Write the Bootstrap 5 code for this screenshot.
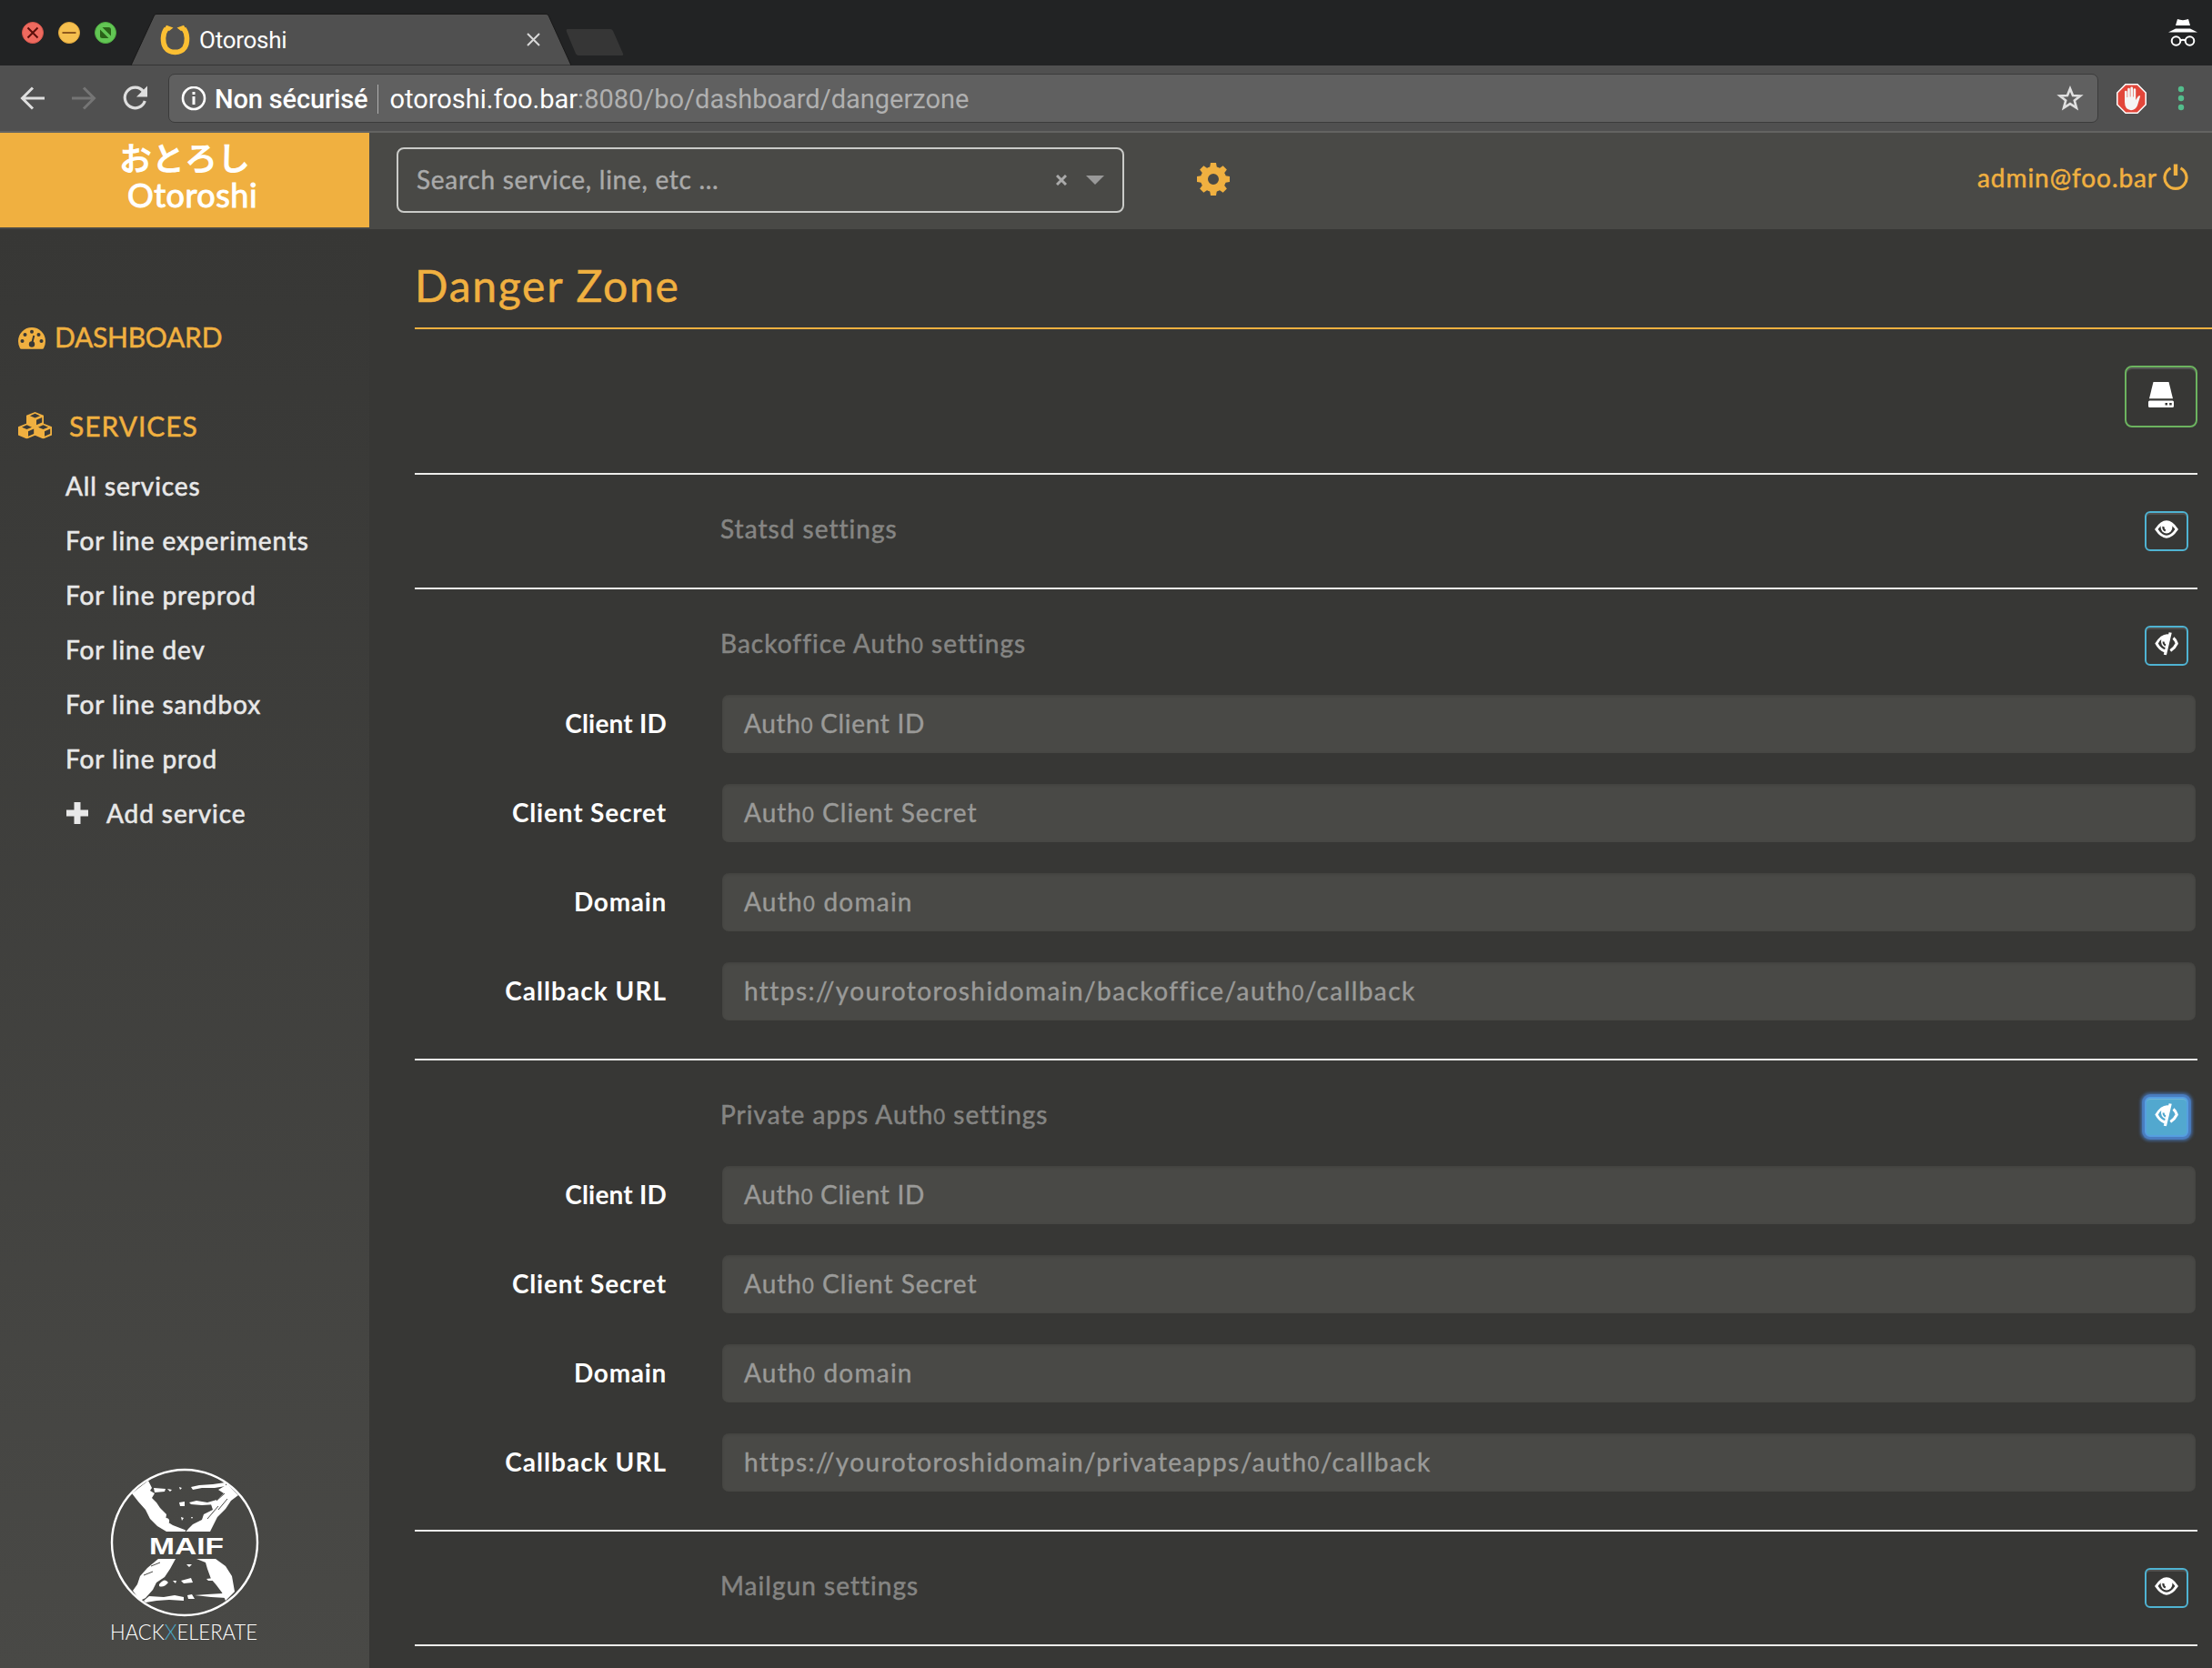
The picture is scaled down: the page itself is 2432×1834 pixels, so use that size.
<!DOCTYPE html>
<html lang="fr">
<head>
<meta charset="utf-8">
<title>Otoroshi</title>
<link href="https://cdn.jsdelivr.net/npm/bootstrap@5.3.0/dist/css/bootstrap.min.css" rel="stylesheet">
<style>
  :root { --oto: #f0b040; --panel: #494946; --ground: #373735; }
  html, body { height: 100%; overflow: hidden; }
  body { margin: 0; background: var(--ground); color: #fff; font-family: Lato, "Noto Sans CJK JP", sans-serif; font-size: 28px; line-height: 40px; }
  svg { display: block; flex: none; }
  .chrome { font-family: Roboto, "Liberation Sans", sans-serif; }
  .tabstrip { height: 72px; background: #222324; }
  .toolbar { height: 74px; background: #505050; border-bottom: 2px solid #636361; padding-left: 22px; }
  .nav-next { margin-left: 28px; }
  .lights { padding: 24px 0 0 24px; gap: 16px; }
  .tabshape { position: relative; width: 484px; height: 72px; margin-left: 16px; }
  .tabshape > svg { position: absolute; left: 0; top: 0; }
  .tab-inner { position: relative; height: 57px; margin-top: 15px; padding-left: 32px; width: 450px; font-size: 26px; }
  .tab-name { margin-left: 10px; letter-spacing: -.25px; }
  .newtab { margin: 31px 0 0 -6px; }
  .incognito { margin: 20px 16px 0 0; }
  .urlbar { width: 2122px; height: 54px; margin-left: 21px; background: #606060; border: 1px solid #3b3b3b; border-radius: 7px; padding: 2px 15px 0 13px; font-size: 29px; }
  .urlbar .insecure { margin-left: 9px; font-weight: 500; letter-spacing: -.15px; }
  .urlbar .rule { width: 1px; height: 32px; margin: 0 12px 0 11px; background: #b0b0b0; }
  .urlbar .path { color: #b0b0b0; }
  .blocker { margin-left: 20px; }
  .dots { margin-left: 34px; }
  .apphead { height: 106px; background: var(--panel); }
  .brandbox { width: 406px; height: 104px; background: var(--oto); font-size: 36px; line-height: 40px; padding-top: 8px; }
  .brand-jp { padding-left: 131px; font-weight: 700; }
  .brand-en { padding-left: 140px; letter-spacing: .5px; -webkit-text-stroke: 1px #fff; }
  .searchbox { width: 800px; height: 72px; margin: 16px 0 0 30px; border: 2px solid #cacbc8; border-radius: 8px; color: #aaa; padding: 0 20px; letter-spacing: .72px; -webkit-text-stroke: .4px #aaa; }
  .searchbox .caret { margin-left: 21px; }
  .searchbox > span { margin-top: -2px; }
  .gear { margin: 32px 0 0 79px; }
  .gold { color: var(--oto); -webkit-text-stroke: .5px var(--oto); }
  .account { padding: 29px 26px 0 0; letter-spacing: .93px; }
  .account svg { margin: 5px 0 0 6px; }
  .sidenav { width: 406px; height: 1582px; background: linear-gradient(#373735, #494946); }
  .side-title { font-size: 30px; line-height: 40px; padding-left: 20px; }
  .side-dash { margin-top: 98px; letter-spacing: -.25px; }
  .side-dash svg { margin: 10px 10px 0 0; }
  .side-serv { margin-top: 58px; letter-spacing: .95px; }
  .side-serv svg { margin: 5px 19px 0 0; }
  .side-list { margin-top: 16px; padding-left: 72px; color: #e8e8e8; letter-spacing: .92px; -webkit-text-stroke: .6px #e8e8e8; }
  .side-list > div { height: 60px; line-height: 60px; }
  .side-list .plus { margin-right: 19px; }
  .hx-logo { margin: 0 0 22px 118px; }
  .work { padding-left: 50px; height: 1582px; overflow: hidden; }
  .work h1 { font-size: 48px; line-height: 70px; font-weight: 400; letter-spacing: 1.75px; margin: 0; padding: 27px 0 11px; border-bottom: 2px solid var(--oto); }
  .savebar { padding: 40px 0 50px; margin-right: 16px; }
  .btn-save { width: 80px; height: 68px; border: 2px solid #6cb35f; border-radius: 8px; padding: 16px 0 0; box-shadow: inset 0 2px 0 #ffffff26; }
  .btn-eye { width: 48px; height: 44px; border: 2px solid #4fb3d2; border-radius: 6px; padding: 8px 0 0; --hole: #373735; margin-right: 10px; box-shadow: inset 0 2px 0 #ffffff20; }
  .btn-eye.closed { padding-top: 5px; }
  .btn-eye.on { background: #52a8cf; border-color: #559fe0; --hole: #52a8cf; box-shadow: inset 0 1px 1px #ffffff30, 0 0 1px 3px #4a7dc0, 0 0 3px 5px #426da5b0; }
  .block-set { border-top: 2px solid #ededeb; margin-right: 16px; padding: 40px 0; }
  .set-head { height: 44px; padding-left: 336px; color: #858583; line-height: 39px; letter-spacing: 1.03px; -webkit-text-stroke: .5px #858583; }
  .set-fields { padding: 32px 2px 2px 0; display: grid; gap: 34px; }
  .set-fields label { flex: none; width: 277px; margin-right: 61px; line-height: 62px; font-weight: 700; text-align: right; }
  .fieldbox { height: 64px; background: var(--panel); border: 0; border-radius: 7px; color: #9a9a98; font-size: 28px; line-height: 62px; padding: 0 0 0 24px; box-shadow: inset 0 1px 3px #00000020; -webkit-text-stroke: .4px #9a9a98; }
  .oz { font-size: .79em; }
  .ls-a { letter-spacing: .2px; }
  .ls-b { letter-spacing: .7px; }
  .ls-c { letter-spacing: .82px; }
  .ls-d { letter-spacing: 1.03px; }
  .ls-e { letter-spacing: 1.25px; }
  .ls-f { letter-spacing: 1.43px; }
</style>
<script src="https://cdn.jsdelivr.net/npm/bootstrap@5.3.0/dist/js/bootstrap.bundle.min.js"></script>
</head>
<body>
<svg width="0" height="0" class="position-absolute">
  <symbol id="eye" viewBox="0 0 26 20">
    <path d="M1.8 10Q13-6.5 24.2 10Q13 26.5 1.8 10Z" fill="none" stroke="#fff" stroke-width="3"/>
    <circle cx="13" cy="8" r="6.4" fill="#fff"/>
    <path d="M9.5 7Q9 10 11.8 11.6" fill="none" stroke="var(--hole)" stroke-width="2.2"/>
  </symbol>
  <symbol id="eyeoff" viewBox="0 0 26 26">
    <path d="M17 2.8Q8 0 .3 12.500Q4.500 20.500 11 22.500L12 19.600Q6.500 18 3.800 12.500Q5.500 9.200 7.200 8Q5.800 15.500 12.600 17.500Z" fill="#fff"/>
    <path d="M9.600 10.500Q9.500 13.500 12.200 14.500" fill="none" stroke="var(--hole)" stroke-width="2"/>
    <path d="M17.200.5L11.400 25" stroke="#fff" stroke-width="3.200"/>
    <path d="M20.500 6.500Q23 8.500 24.300 12.500Q22 17.500 17.300 20.500" fill="none" stroke="#fff" stroke-width="3"/>
  </symbol>
  <symbol id="cube" viewBox="0 0 19 17">
    <path fill-rule="evenodd" fill="#f0b040" d="M9.500 0L19 3.800V13L9.500 17L0 13V3.800ZM9.500 1.800L4 4.200L9.500 6.500L15 4.200ZM11 8.700V14.300L17.200 11.600V6Z"/>
  </symbol>
  <symbol id="tooth" viewBox="-19 -19 38 38"><path d="M-4-12L-3-18H3L4-12Z" fill="#f0b040"/></symbol>
</svg>

<div class="chrome">
  <div class="tabstrip d-flex">
    <div class="lights d-flex">
      <svg width="24" height="24" viewBox="0 0 24 24"><circle cx="12" cy="12" r="11.500" fill="#ee6a5f" stroke="#d5564c"/><path d="M6.500 6.500l11 11m0-11l-11 11" stroke="#5b0f0b" stroke-width="2"/></svg>
      <svg width="24" height="24" viewBox="0 0 24 24"><circle cx="12" cy="12" r="11.500" fill="#f5bf4f" stroke="#dba33b"/><path d="M4.500 12h15" stroke="#8f591d" stroke-width="2"/></svg>
      <svg width="24" height="24" viewBox="0 0 24 24"><circle cx="12" cy="12" r="11.500" fill="#62c654" stroke="#4faa41"/><path d="M8.500 6h7a2.500 2.500 0 0 1 2.500 2.500v7zM6 8.500v7A2.500 2.500 0 0 0 8.500 18h7z" fill="#2a6218"/></svg>
    </div>
    <div class="tabshape">
      <svg width="484" height="72"><path d="M0 72L25.500 17Q26 15.500 28 15.500H456Q458 15.500 459 17L484 72Z" fill="#505050" stroke="#191919"/></svg>
      <div class="tab-inner d-flex align-items-center">
        <svg width="33" height="34" viewBox="0 0 33 34"><path d="M7 4.500C2.500 10 2.500 20 6 25.500C10.500 32 22.500 32 27 25.500C30.500 20 30.500 10 26 4.500" fill="none" stroke="#fbbf33" stroke-width="5.600"/><path d="M4.500 5L7 .8L14.500 3.500L10 7ZM28.500 5L26 .8L18.500 3.500L23 7Z" fill="#fbbf33"/></svg>
        <span class="tab-name">Otoroshi</span>
        <svg class="ms-auto" width="15" height="15"><path d="M1 1l13 13m0-13L1 14" stroke="#d8d8d8" stroke-width="2"/></svg>
      </div>
    </div>
    <svg class="newtab" width="64" height="31"><path d="M2 1H49Q51 1 52 3L63 28Q64 30 61 30H14Q12 30 11 28L1 4Q0 1 2 1Z" fill="#363636"/></svg>
    <svg class="incognito ms-auto" width="32" height="32" viewBox="0 0 32 32"><path d="M10 1Q13 2 16 2.200Q19 2 22 1L24 8H8ZM8 11.500H24L32 15.600H0Z" fill="#fff"/><g fill="none" stroke="#fff" stroke-width="2"><circle cx="8.500" cy="25" r="4.800"/><circle cx="23.500" cy="25" r="4.800"/><path d="M13.300 24.500q2.700-1.500 5.400 0"/></g></svg>
  </div>
  <div class="toolbar d-flex align-items-center">
    <svg width="28" height="28" viewBox="0 0 28 28"><path d="M27 14H3M14 2.500L2.500 14L14 25.500" fill="none" stroke="#dedede" stroke-width="3"/></svg>
    <svg class="nav-next" width="28" height="28" viewBox="0 0 28 28"><path d="M1 14H25M14 2.500L25.500 14L14 25.500" fill="none" stroke="#757575" stroke-width="3"/></svg>
    <svg class="nav-next" width="30" height="28" viewBox="0 0 30 28"><path d="M23.500 6.500A11.300 11.300 0 1 0 25.300 17" fill="none" stroke="#dedede" stroke-width="3.200"/><path d="M28 .5V12.500H16Z" fill="#dedede"/></svg>
    <div class="urlbar d-flex align-items-center">
      <svg width="28" height="28" viewBox="0 0 28 28"><circle cx="14" cy="13" r="12" fill="none" stroke="#fff" stroke-width="2.600"/><path d="M14 11v9M14 6v3" stroke="#fff" stroke-width="3"/></svg>
      <span class="insecure">Non sécurisé</span>
      <span class="rule"></span>
      <span>otoroshi.foo.bar<span class="path">:8080/bo/dashboard/dangerzone</span></span>
      <svg class="ms-auto" width="30" height="30" viewBox="0 0 30 30"><path d="M15 3.500L18 11.100L26.200 11.500L19.800 16.600L22 24.600L15 20.100L8 24.600L10.200 16.600L3.800 11.500L12 11.100Z" fill="none" stroke="#e0e0e0" stroke-width="2.600"/></svg>
    </div>
    <svg class="blocker" width="33" height="33" viewBox="0 0 33 33"><path d="M10 .8H23L32.200 10V23L23 32.200H10L.8 23V10Z" fill="#e2463a" stroke="#fff" stroke-width="1.500"/><path d="M9 20V9a1.300 1.300 0 0 1 2.600 0v6h.6V6a1.300 1.300 0 0 1 2.600 0v8.500h.6V4.800a1.300 1.300 0 0 1 2.600 0v9.700h.6V6.500a1.300 1.300 0 0 1 2.600 0V18l2.500-4q1.300-1.500 2.500-.4L23 24q-2 5-7 5.200Q9 28.500 9 20Z" fill="#f5f5f5"/></svg>
    <svg class="dots" width="8" height="30"><g fill="#53bd8c"><circle cx="4" cy="5" r="3.200"/><circle cx="4" cy="15" r="3.200"/><circle cx="4" cy="25" r="3.200"/></g></svg>
  </div>
</div>

<header class="apphead d-flex">
  <div class="brandbox">
    <div class="brand-jp">おとろし</div>
    <div class="brand-en">Otoroshi</div>
  </div>
  <div class="searchbox d-flex align-items-center">
    <span>Search service, line, etc ...</span>
    <svg class="ms-auto" width="12" height="12"><path d="M1 1l10 10m0-10L1 11" stroke="#aaa" stroke-width="3"/></svg>
    <svg class="caret" width="20" height="10"><path d="M0 0H20L10 10Z" fill="#999"/></svg>
  </div>
  <svg class="gear" width="38" height="38" viewBox="-19 -19 38 38"><circle r="10" fill="none" stroke="#f0b040" stroke-width="8"/><g fill="#f0b040"><path d="M-4-12L-3-18H3L4-12Z"/><path d="M-4-12L-3-18H3L4-12Z" transform="rotate(45)"/><path d="M-4-12L-3-18H3L4-12Z" transform="rotate(90)"/><path d="M-4-12L-3-18H3L4-12Z" transform="rotate(135)"/><path d="M-4-12L-3-18H3L4-12Z" transform="rotate(180)"/><path d="M-4-12L-3-18H3L4-12Z" transform="rotate(225)"/><path d="M-4-12L-3-18H3L4-12Z" transform="rotate(270)"/><path d="M-4-12L-3-18H3L4-12Z" transform="rotate(315)"/></g></svg>
  <div class="account ms-auto d-flex gold">
    <span>admin@foo.bar</span>
    <svg width="28" height="30" viewBox="0 0 28 30"><path d="M8.500 4.800A12 12 0 1 0 19.500 4.800" fill="none" stroke="#f0b040" stroke-width="3.200"/><path d="M14 .5V13" stroke="#f0b040" stroke-width="4.400"/></svg>
  </div>
</header>

<div class="d-flex">
  <nav class="sidenav d-flex flex-column">
    <div class="side-title side-dash gold d-flex">
      <svg width="30" height="24" viewBox="0 0 30 24"><path d="M15 0A15 15 0 0 0 0 15Q0 19.500 2 23Q2.300 23.700 3.500 23.700H26.500Q27.700 23.700 28 23Q30 19.500 30 15A15 15 0 0 0 15 0Z" fill="#f0b040"/><g fill="#383836"><circle cx="4.500" cy="15" r="2"/><circle cx="7.500" cy="8" r="2"/><circle cx="15" cy="4.800" r="2"/><circle cx="22.500" cy="8" r="2"/><circle cx="25.500" cy="15" r="2"/><circle cx="15" cy="18.500" r="3.200"/></g><path d="M15.300 17L17.300 9" stroke="#383836" stroke-width="2"/></svg>
      <span>DASHBOARD</span>
    </div>
    <div class="side-title side-serv gold d-flex">
      <svg width="37" height="30" viewBox="0 0 37 30"><use href="#cube" x="9" y="0" width="19" height="17"/><use href="#cube" x="0" y="12.500" width="19" height="17"/><use href="#cube" x="18" y="12.500" width="19" height="17"/></svg>
      <span>SERVICES</span>
    </div>
    <div class="side-list">
      <div>All services</div>
      <div>For line experiments</div>
      <div>For line preprod</div>
      <div>For line dev</div>
      <div>For line sandbox</div>
      <div>For line prod</div>
      <div class="d-flex align-items-center"><svg class="plus" width="26" height="26"><path d="M13 1V25M1 13H25" stroke="#e8e8e8" stroke-width="7"/></svg><span>Add service</span></div>
    </div>
    <svg class="hx-logo mt-auto" width="172" height="200" viewBox="118 1612 172 200">
      <circle cx="203" cy="1696" r="80" fill="none" stroke="#fff" stroke-width="2.400"/>
      <g fill="#fff">
        <path d="M145 1642L163 1628L167 1636L165 1639L170 1642L167 1647L172 1652L176 1658L183 1665L182 1672L190 1677L203 1682L206 1684H183L173 1678L165 1670L160 1660L152 1651Z"/>
        <path d="M262 1644L250 1632L240 1638L246 1642L238 1650L232 1654L234 1660L224 1665L222 1671L212 1676L204 1684H231L235 1676L239 1668L248 1659L254 1650Z"/>
        <path d="M169 1636L182 1637L181 1640L170 1641ZM184 1637L189 1638L187 1640ZM197 1635L200 1636L198 1638ZM210 1635L219 1633L234 1632L248 1630V1634L236 1636L222 1636L212 1638ZM197 1652L203 1651V1656L198 1656ZM208 1652L216 1650L228 1652L242 1648L238 1654L222 1655L210 1654ZM199 1668L202 1669L200 1672ZM210 1668L212 1668 211 1670ZM182 1669Q187 1669 186 1674L182 1674Z"/>
        <path d="M174 1714H193L187 1725L181 1734L172 1740L168 1748L160 1757L154 1760L146 1749L151 1742L154 1733L162 1724Z"/>
        <path d="M216 1714L237 1714L248 1722L255 1733L258 1750L248 1760L244 1751L238 1743L232 1736L228 1725L226 1718Z"/>
        <path d="M158 1760L164 1755L180 1756L192 1754L202 1756V1760L186 1759L172 1760L160 1762ZM206 1754L211 1753L214 1758L207 1758ZM214 1754L228 1753L245 1752L249 1757L232 1756ZM175 1742Q181 1734 185 1740Q180 1746 175 1744ZM190 1738L194 1738 193 1741ZM199 1738L210 1735L212 1740L202 1741ZM205 1720L211 1720L208 1723ZM227 1736L235 1735V1738L229 1738Z"/>
      </g>
      <g stroke="#494946" stroke-width="1"><path d="M238 1650L247 1642M240 1660L250 1648M228 1670L240 1656M166 1722L176 1718M158 1732L168 1728M204 1684L209 1677"/></g>
      <text x="164" y="1708.500" font-family="Liberation Sans" font-weight="700" font-size="25.500" textLength="82" lengthAdjust="spacingAndGlyphs" fill="#fff">MAIF</text>
      <text x="121" y="1803" font-family="Lato" font-weight="300" font-size="23" textLength="162" lengthAdjust="spacingAndGlyphs" fill="#fff">HACK<tspan fill="#4aa8c8">X</tspan>ELERATE</text>
    </svg>
  </nav>

  <main class="work flex-grow-1">
    <h1 class="gold">Danger Zone</h1>
    <div class="savebar d-flex justify-content-end">
      <button class="btn btn-save d-flex justify-content-center"><svg width="28" height="28" viewBox="0 0 28 28"><path d="M5.500 0H22.500L27 18.300H1Z" fill="#fff"/><path fill-rule="evenodd" d="M1.500 20.500H26.500Q28 20.500 28 22V26.500Q28 28 26.500 28H1.500Q0 28 0 26.500V22Q0 20.500 1.500 20.500ZM18.500 23v2.500H21V23ZM23.200 23v2.500h2.500V23Z" fill="#fff"/></svg></button>
    </div>

    <section class="block-set">
      <div class="set-head d-flex justify-content-between"><span>Statsd settings</span><button class="btn btn-eye d-flex justify-content-center"><svg width="26" height="20"><use href="#eye"/></svg></button></div>
    </section>

    <section class="block-set">
      <div class="set-head d-flex justify-content-between"><span>Backoffice Auth<span class="oz">0</span> settings</span><button class="btn btn-eye closed d-flex justify-content-center"><svg width="26" height="26"><use href="#eyeoff"/></svg></button></div>
      <div class="set-fields">
        <div class="d-flex"><label class="ls-a">Client ID</label><div class="form-control fieldbox ls-b">Auth<span class="oz">0</span> Client ID</div></div>
        <div class="d-flex"><label class="ls-c">Client Secret</label><div class="form-control fieldbox ls-d">Auth<span class="oz">0</span> Client Secret</div></div>
        <div class="d-flex"><label class="ls-b">Domain</label><div class="form-control fieldbox ls-e">Auth<span class="oz">0</span> domain</div></div>
        <div class="d-flex"><label class="ls-d">Callback URL</label><div class="form-control fieldbox ls-f">https://yourotoroshidomain/backoffice/auth<span class="oz">0</span>/callback</div></div>
      </div>
    </section>

    <section class="block-set">
      <div class="set-head d-flex justify-content-between"><span>Private apps Auth<span class="oz">0</span> settings</span><button class="btn btn-eye closed on d-flex justify-content-center"><svg width="26" height="26"><use href="#eyeoff"/></svg></button></div>
      <div class="set-fields">
        <div class="d-flex"><label class="ls-a">Client ID</label><div class="form-control fieldbox ls-b">Auth<span class="oz">0</span> Client ID</div></div>
        <div class="d-flex"><label class="ls-c">Client Secret</label><div class="form-control fieldbox ls-d">Auth<span class="oz">0</span> Client Secret</div></div>
        <div class="d-flex"><label class="ls-b">Domain</label><div class="form-control fieldbox ls-e">Auth<span class="oz">0</span> domain</div></div>
        <div class="d-flex"><label class="ls-d">Callback URL</label><div class="form-control fieldbox ls-f">https://yourotoroshidomain/privateapps/auth<span class="oz">0</span>/callback</div></div>
      </div>
    </section>

    <section class="block-set">
      <div class="set-head d-flex justify-content-between"><span>Mailgun settings</span><button class="btn btn-eye d-flex justify-content-center"><svg width="26" height="20"><use href="#eye"/></svg></button></div>
    </section>
    <section class="block-set"></section>
  </main>
</div>
</body>
</html>
